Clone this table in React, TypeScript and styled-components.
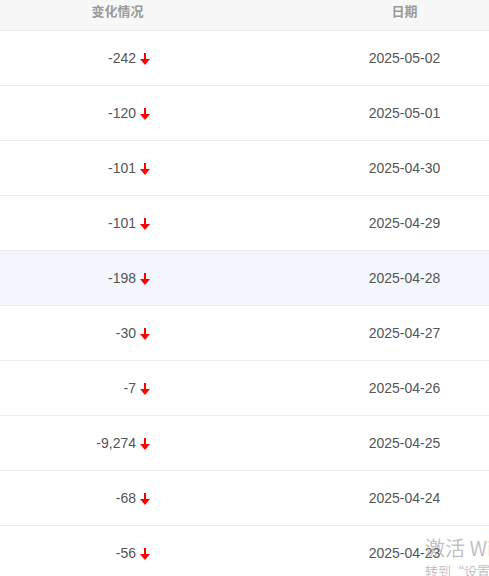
import React from "react";
import styled, { createGlobalStyle } from "styled-components";

const Global = createGlobalStyle`
  html, body { margin: 0; padding: 0; background: #fff; overflow: hidden; }
  body { font-family: "Liberation Sans", Arial, "Noto Sans CJK SC", sans-serif; }
`;

const Page = styled.div`
  position: relative;
  width: 489px;
  height: 576px;
  overflow: hidden;
`;

const Table = styled.div`
  display: grid;
  grid-template-columns: 235px 85px 169px;
`;

const HeaderRow = styled.div`
  display: contents;
`;

const HeadCell = styled.div`
  height: 31px;
  background: #f7f7f7;
  border-bottom: 1px solid #ececec;
  display: flex;
  justify-content: center;
  align-items: flex-start;
  padding-top: 2px;
  box-sizing: border-box;
  font-family: "Noto Sans CJK SC", sans-serif;
  font-weight: 700;
  font-size: 13px;
  line-height: 18px;
  color: #9a9a9a;
`;

const Row = styled.div<{ $active?: boolean }>`
  display: contents;
  & > div {
    background: ${(p) => (p.$active ? "#f3f6fd" : "#fff")};
  }
`;

const Cell = styled.div<{ $align: "right" | "center" }>`
  height: 55px;
  box-sizing: border-box;
  border-bottom: 1px solid #ececec;
  display: flex;
  align-items: center;
  justify-content: ${(p) => (p.$align === "right" ? "flex-end" : "center")};
  padding-right: ${(p) => (p.$align === "right" ? "85px" : "0")};
  font-size: 14px;
  color: #555;
  gap: 4px;
`;

const Arrow = () => (
  <svg width="10" height="12" viewBox="0 0 10 12" style={{ marginTop: 1 }}>
    <rect x="4" y="0" width="2" height="7" fill="#ff0000" />
    <polygon points="0,6 10,6 5,12" fill="#ff0000" />
  </svg>
);

const Watermark = styled.div`
  position: absolute;
  left: 425px;
  top: 535px;
  color: rgba(150, 150, 150, 0.6);
  font-family: "Noto Sans CJK SC", sans-serif;
  white-space: nowrap;
  pointer-events: none;
`;

const WmTitle = styled.div`
  font-size: 20px;
  line-height: 26px;
`;

const WmSub = styled.div`
  font-size: 13px;
  line-height: 16px;
  margin-top: 2px;
`;

const data: [string, string][] = [
  ["-242", "2025-05-02"],
  ["-120", "2025-05-01"],
  ["-101", "2025-04-30"],
  ["-101", "2025-04-29"],
  ["-198", "2025-04-28"],
  ["-30", "2025-04-27"],
  ["-7", "2025-04-26"],
  ["-9,274", "2025-04-25"],
  ["-68", "2025-04-24"],
  ["-56", "2025-04-23"],
];

export default function App() {
  return (
    <Page>
      <Global />
      <Table>
        <HeaderRow>
          <HeadCell>变化情况</HeadCell>
          <HeadCell />
          <HeadCell>日期</HeadCell>
        </HeaderRow>
        {data.map(([v, d], i) => (
          <Row key={d} $active={i === 4}>
            <Cell $align="right">
              <span>{v}</span>
              <Arrow />
            </Cell>
            <Cell $align="center" />
            <Cell $align="center">{d}</Cell>
          </Row>
        ))}
      </Table>
      <Watermark>
        <WmTitle>激活 Windows</WmTitle>
        <WmSub>转到“设置”以激活 Windows。</WmSub>
      </Watermark>
    </Page>
  );
}
